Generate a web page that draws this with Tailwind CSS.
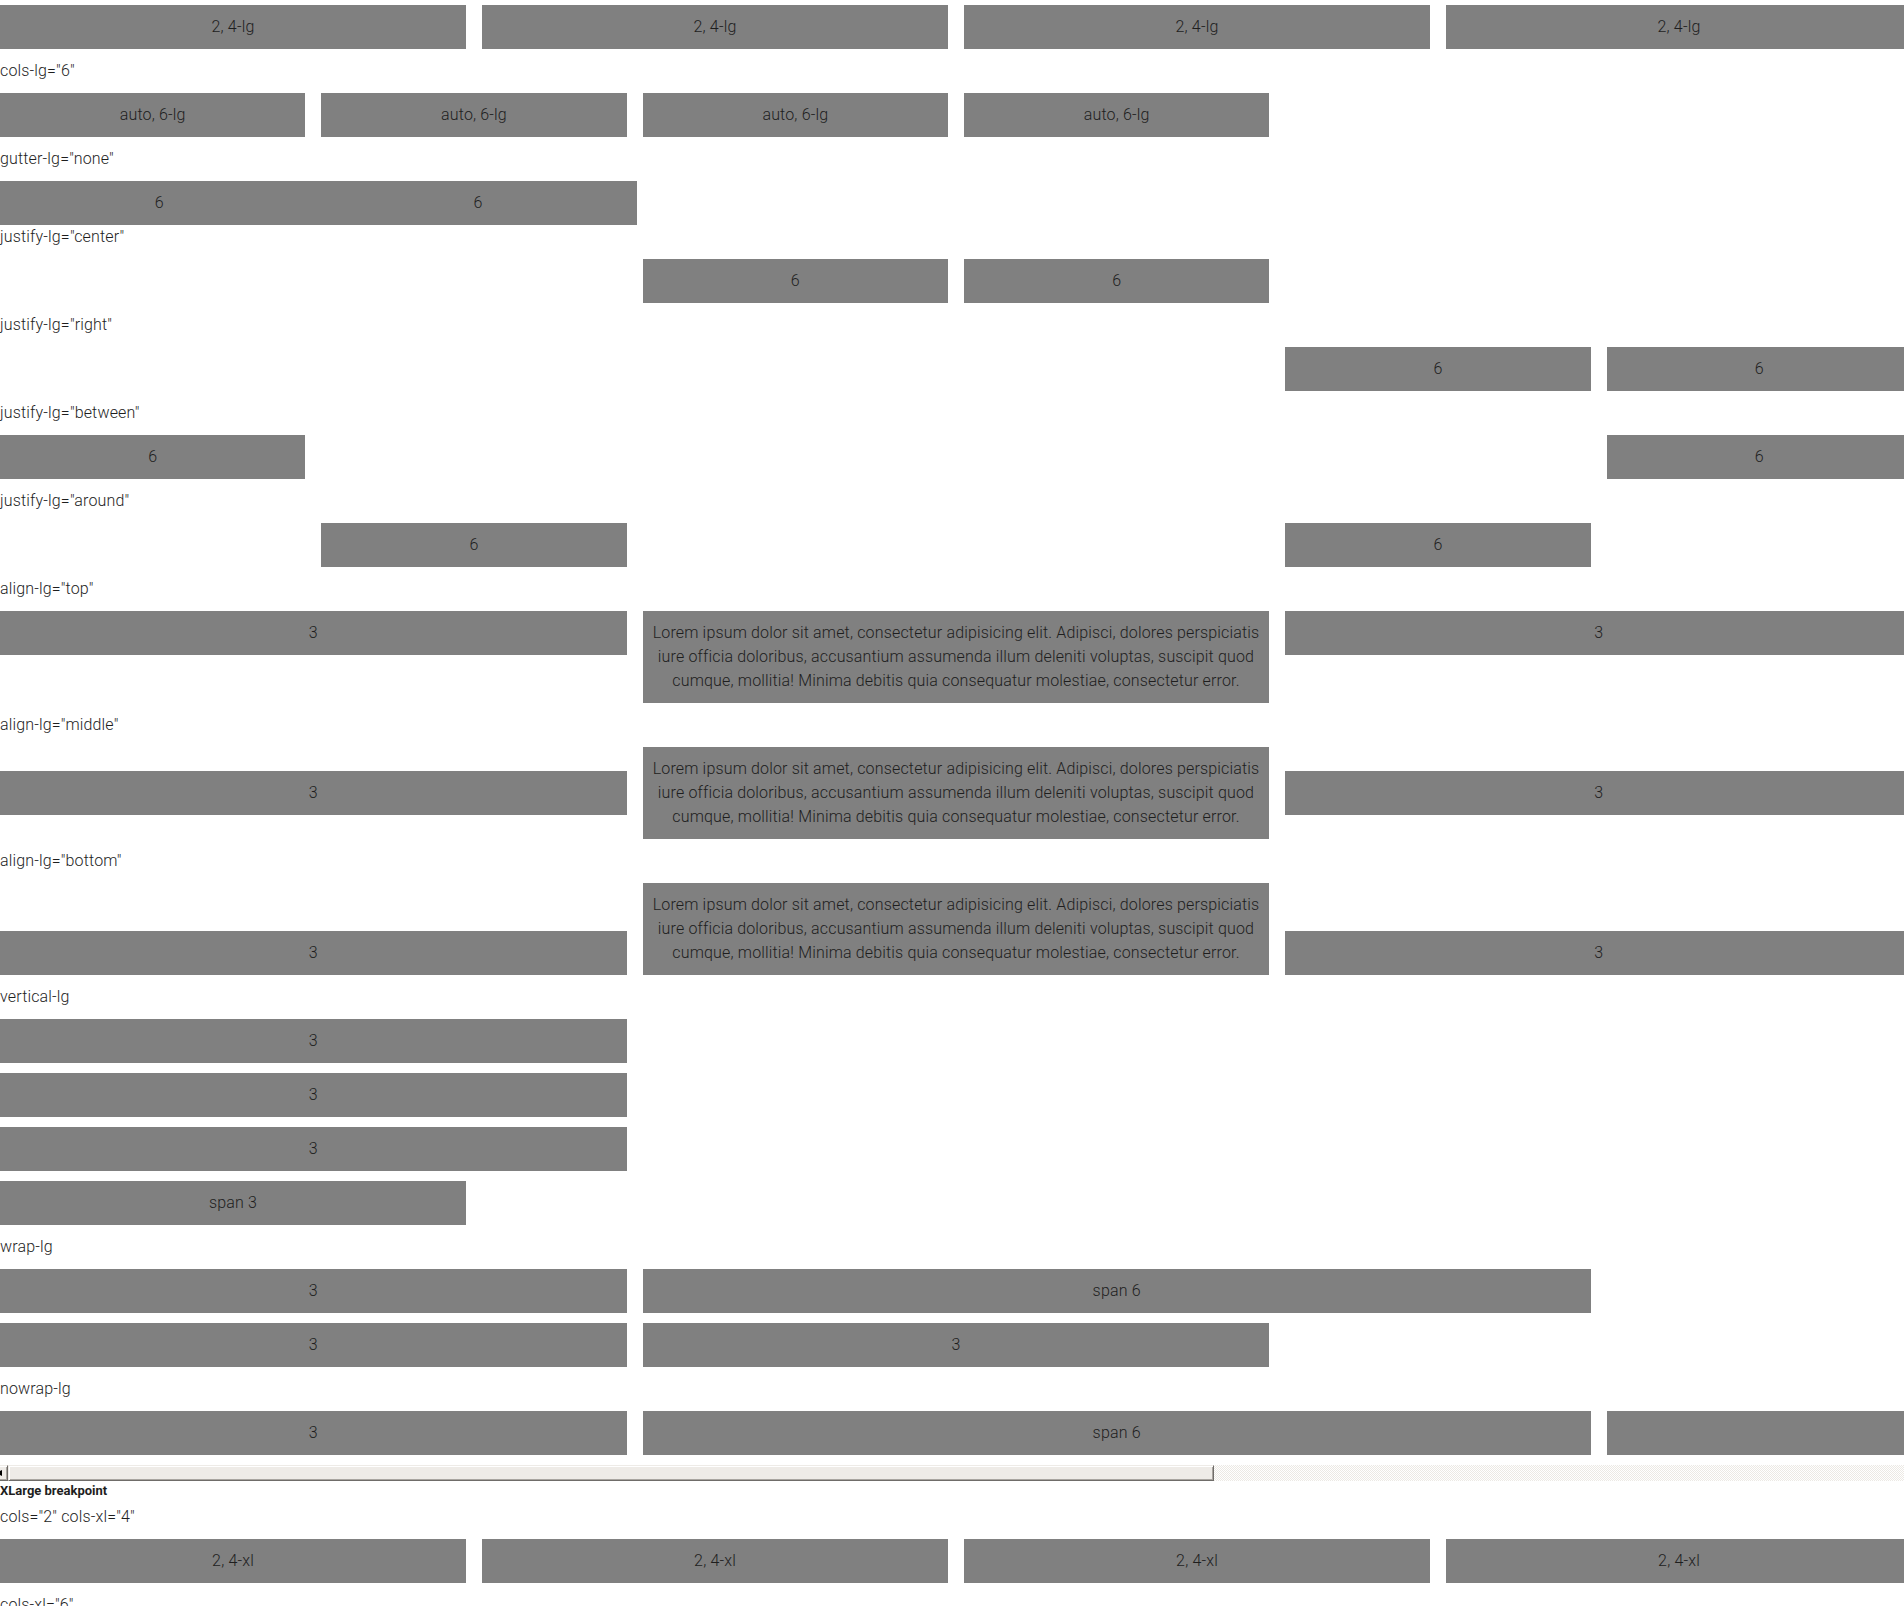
<!DOCTYPE html>
<html lang="en">
<head>
<meta charset="utf-8">
<title>Grid breakpoints</title>
<script src="https://cdn.jsdelivr.net/npm/@tailwindcss/browser@4"></script>
</head>
<body class="overflow-hidden bg-white">
<main class="w-[calc(100%+8px)] font-['Roboto',sans-serif] text-base leading-6 font-light tracking-[0.01em] text-[#1e1e1e]">

<section>
<div class="grid grid-cols-4 gap-4 pt-[5px] pb-2.5 text-center">
<div class="bg-[#808080] p-2.5">2, 4-lg</div>
<div class="bg-[#808080] p-2.5">2, 4-lg</div>
<div class="bg-[#808080] p-2.5">2, 4-lg</div>
<div class="bg-[#808080] p-2.5">2, 4-lg</div>
</div>
</section>

<section>
<p>cols-lg="6"</p>
<div class="grid grid-cols-6 gap-4 py-2.5 text-center">
<div class="bg-[#808080] p-2.5">auto, 6-lg</div>
<div class="bg-[#808080] p-2.5">auto, 6-lg</div>
<div class="bg-[#808080] p-2.5">auto, 6-lg</div>
<div class="bg-[#808080] p-2.5">auto, 6-lg</div>
</div>
</section>

<section>
<p>gutter-lg="none"</p>
<div class="grid grid-cols-6 pt-2.5 text-center">
<div class="bg-[#808080] p-2.5">6</div>
<div class="bg-[#808080] p-2.5">6</div>
</div>
</section>

<section>
<p>justify-lg="center"</p>
<div class="grid grid-cols-6 gap-4 py-2.5 text-center">
<div class="col-start-3 bg-[#808080] p-2.5">6</div>
<div class="bg-[#808080] p-2.5">6</div>
</div>
</section>

<section>
<p>justify-lg="right"</p>
<div class="grid grid-cols-6 gap-4 py-2.5 text-center">
<div class="col-start-5 bg-[#808080] p-2.5">6</div>
<div class="bg-[#808080] p-2.5">6</div>
</div>
</section>

<section>
<p>justify-lg="between"</p>
<div class="grid grid-cols-6 gap-4 py-2.5 text-center">
<div class="bg-[#808080] p-2.5">6</div>
<div class="col-start-6 bg-[#808080] p-2.5">6</div>
</div>
</section>

<section>
<p>justify-lg="around"</p>
<div class="grid grid-cols-6 gap-4 py-2.5 text-center">
<div class="col-start-2 bg-[#808080] p-2.5">6</div>
<div class="col-start-5 bg-[#808080] p-2.5">6</div>
</div>
</section>

<section>
<p>align-lg="top"</p>
<div class="grid grid-cols-3 items-start gap-4 py-2.5 text-center">
<div class="bg-[#808080] p-2.5">3</div>
<div class="bg-[#808080] p-2.5">Lorem ipsum dolor sit amet, consectetur adipisicing elit. Adipisci, dolores perspiciatis iure officia doloribus, accusantium assumenda illum deleniti voluptas, suscipit quod cumque, mollitia! Minima debitis quia consequatur molestiae, consectetur error.</div>
<div class="bg-[#808080] p-2.5">3</div>
</div>
</section>

<section>
<p>align-lg="middle"</p>
<div class="grid grid-cols-3 items-center gap-4 py-2.5 text-center">
<div class="bg-[#808080] p-2.5">3</div>
<div class="bg-[#808080] p-2.5">Lorem ipsum dolor sit amet, consectetur adipisicing elit. Adipisci, dolores perspiciatis iure officia doloribus, accusantium assumenda illum deleniti voluptas, suscipit quod cumque, mollitia! Minima debitis quia consequatur molestiae, consectetur error.</div>
<div class="bg-[#808080] p-2.5">3</div>
</div>
</section>

<section>
<p>align-lg="bottom"</p>
<div class="grid grid-cols-3 items-end gap-4 py-2.5 text-center">
<div class="bg-[#808080] p-2.5">3</div>
<div class="bg-[#808080] p-2.5">Lorem ipsum dolor sit amet, consectetur adipisicing elit. Adipisci, dolores perspiciatis iure officia doloribus, accusantium assumenda illum deleniti voluptas, suscipit quod cumque, mollitia! Minima debitis quia consequatur molestiae, consectetur error.</div>
<div class="bg-[#808080] p-2.5">3</div>
</div>
</section>

<section>
<p>vertical-lg</p>
<div class="grid grid-cols-12 gap-x-4 gap-y-2.5 py-2.5 text-center">
<div class="col-span-4 bg-[#808080] p-2.5">3</div>
<div class="col-span-4 col-start-1 bg-[#808080] p-2.5">3</div>
<div class="col-span-4 col-start-1 bg-[#808080] p-2.5">3</div>
<div class="col-span-3 col-start-1 bg-[#808080] p-2.5">span 3</div>
</div>
</section>

<section>
<p>wrap-lg</p>
<div class="grid grid-cols-12 gap-x-4 gap-y-2.5 py-2.5 text-center">
<div class="col-span-4 bg-[#808080] p-2.5">3</div>
<div class="col-span-6 bg-[#808080] p-2.5">span 6</div>
<div class="col-span-4 col-start-1 bg-[#808080] p-2.5">3</div>
<div class="col-span-4 bg-[#808080] p-2.5">3</div>
</div>
</section>

<section>
<p>nowrap-lg</p>
<div class="grid grid-cols-12 gap-4 py-2.5 text-center">
<div class="col-span-4 bg-[#808080] p-2.5">3</div>
<div class="col-span-6 bg-[#808080] p-2.5">span 6</div>
<div class="col-span-2 bg-[#808080] p-2.5"></div>
</div>
<!-- horizontal scrollbar: left arrow, thumb, dithered track -->
<div class="flex h-4 bg-[repeating-conic-gradient(#ece9e4_0_25%,#ffffff_0_50%)] bg-size-[2px_2px]">
<div class="flex w-2 items-center border-t border-r border-b border-t-[#eeebe7] border-r-[#6f6c69] border-b-[#6f6c69] bg-[#eeebe7] shadow-[inset_0_1px_0_#ffffff,inset_-1px_-1px_0_#a9a5a0]">
<svg class="h-1.5 w-0.5" viewBox="0 0 2 6" aria-hidden="true"><path d="M0 1L2 0V6L0 5Z" fill="#000"/></svg>
</div>
<div class="w-[63.1%] border border-t-[#eeebe7] border-r-[#6f6c69] border-b-[#6f6c69] border-l-[#eeebe7] bg-[#eeebe7] shadow-[inset_1px_1px_0_#ffffff,inset_-1px_-1px_0_#a9a5a0]"></div>
</div>
</section>

<section>
<h2 class="mb-1 text-[13px] leading-5 font-bold tracking-normal">XLarge breakpoint</h2>
<p>cols="2" cols-xl="4"</p>
<div class="grid grid-cols-4 gap-4 py-2.5 text-center">
<div class="bg-[#808080] p-2.5">2, 4-xl</div>
<div class="bg-[#808080] p-2.5">2, 4-xl</div>
<div class="bg-[#808080] p-2.5">2, 4-xl</div>
<div class="bg-[#808080] p-2.5">2, 4-xl</div>
</div>
<p>cols-xl="6"</p>
</section>

</main>
</body>
</html>
